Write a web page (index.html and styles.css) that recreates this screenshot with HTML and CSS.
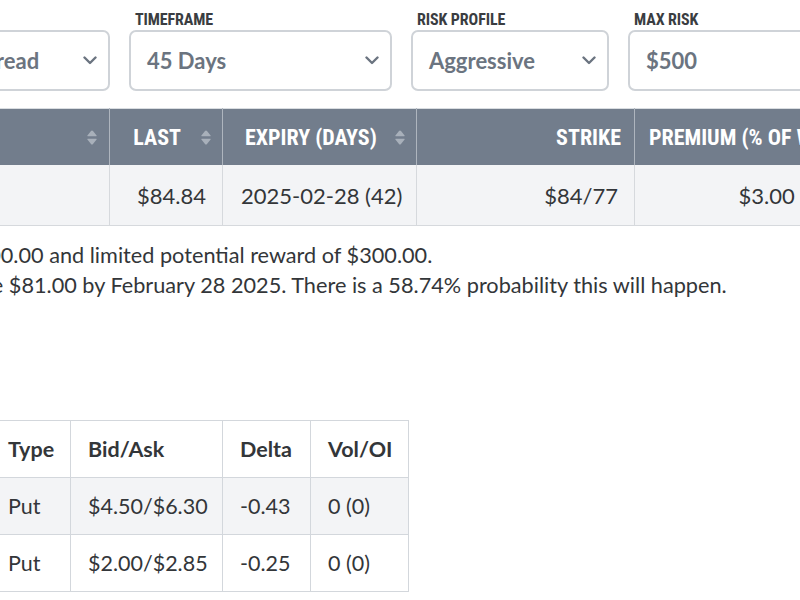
FILE: index.html
```html
<!DOCTYPE html>
<html lang="en">
<head>
<meta charset="utf-8">
<title>Trade Finder</title>
<link rel="stylesheet" href="styles.css">
</head>
<body>
<div class="page">
  <div class="filters">
    <div class="filter f-strategy">
      <div class="label">STRATEGY</div>
      <div class="select"><span>Bull Put Spread</span><svg class="chev" viewBox="0 0 14 9" width="14" height="9"><polyline points="1.5,1.5 7,7 12.5,1.5"/></svg></div>
    </div>
    <div class="filter f-time">
      <div class="label">TIMEFRAME</div>
      <div class="select"><span>45 Days</span><svg class="chev" viewBox="0 0 14 9" width="14" height="9"><polyline points="1.5,1.5 7,7 12.5,1.5"/></svg></div>
    </div>
    <div class="filter f-risk">
      <div class="label">RISK PROFILE</div>
      <div class="select"><span>Aggressive</span><svg class="chev" viewBox="0 0 14 9" width="14" height="9"><polyline points="1.5,1.5 7,7 12.5,1.5"/></svg></div>
    </div>
    <div class="filter f-max">
      <div class="label">MAX RISK</div>
      <div class="select input"><span>$500</span></div>
    </div>
  </div>

  <table class="results">
    <thead>
      <tr>
        <th class="c-sym"><div class="th-in between"><span>SYMBOL</span><svg class="sort" viewBox="0 0 10 15" width="10" height="15"><path d="M5 0.5 Q5.6 0.5 6 1 L9.6 5.6 Q10 6.3 9.2 6.3 H0.8 Q0 6.3 0.4 5.6 L4 1 Q4.4 0.5 5 0.5Z M5 14.5 Q4.4 14.5 4 14 L0.4 9.4 Q0 8.7 0.8 8.7 H9.2 Q10 8.7 9.6 9.4 L6 14 Q5.6 14.5 5 14.5Z"/></svg></div></th>
        <th class="c-last"><div class="th-in end"><span>LAST</span><svg class="sort" viewBox="0 0 10 15" width="10" height="15"><path d="M5 0.5 Q5.6 0.5 6 1 L9.6 5.6 Q10 6.3 9.2 6.3 H0.8 Q0 6.3 0.4 5.6 L4 1 Q4.4 0.5 5 0.5Z M5 14.5 Q4.4 14.5 4 14 L0.4 9.4 Q0 8.7 0.8 8.7 H9.2 Q10 8.7 9.6 9.4 L6 14 Q5.6 14.5 5 14.5Z"/></svg></div></th>
        <th class="c-exp"><div class="th-in between"><span>EXPIRY (DAYS)</span><svg class="sort" viewBox="0 0 10 15" width="10" height="15"><path d="M5 0.5 Q5.6 0.5 6 1 L9.6 5.6 Q10 6.3 9.2 6.3 H0.8 Q0 6.3 0.4 5.6 L4 1 Q4.4 0.5 5 0.5Z M5 14.5 Q4.4 14.5 4 14 L0.4 9.4 Q0 8.7 0.8 8.7 H9.2 Q10 8.7 9.6 9.4 L6 14 Q5.6 14.5 5 14.5Z"/></svg></div></th>
        <th class="c-strike"><div class="th-in end"><span>STRIKE</span></div></th>
        <th class="c-prem"><div class="th-in start"><span>PREMIUM (% OF WIDTH)</span></div></th>
      </tr>
    </thead>
    <tbody>
      <tr>
        <td class="c-sym">XOM</td>
        <td class="c-last num">$84.84</td>
        <td class="c-exp">2025-02-28 (42)</td>
        <td class="c-strike num">$84/77</td>
        <td class="c-prem num">$3.00 (42.86%)</td>
      </tr>
    </tbody>
  </table>

  <div class="summary">
    <p class="line l1">$200.00 and limited potential reward of $300.00.</p>
    <p class="line l2">above $81.00 by February 28 2025. There is a 58.74% probability this will happen.</p>
  </div>

  <table class="legs">
    <thead>
      <tr><th class="c-type">Type</th><th class="c-bid">Bid/Ask</th><th class="c-delta">Delta</th><th class="c-vol">Vol/OI</th></tr>
    </thead>
    <tbody>
      <tr class="alt"><td>Put</td><td>$4.50/$6.30</td><td>-0.43</td><td>0 (0)</td></tr>
      <tr><td>Put</td><td>$2.00/$2.85</td><td>-0.25</td><td>0 (0)</td></tr>
    </tbody>
  </table>
</div>
</body>
</html>
```
FILE: styles.css
```css
html, body {
  margin: 0;
  padding: 0;
  overflow: hidden;
  background: #ffffff;
}
body {
  width: 800px;
  height: 600px;
  font-family: Lato, "Open Sans", sans-serif;
  color: #333639;
}
.page {
  width: 800px;
}

/* filters */
.filters {
  display: flex;
  gap: 19px;
  padding-top: 9px;
  margin-left: -129px;
}
.filter {
  flex: none;
  display: flex;
  flex-direction: column;
}
.f-strategy { width: 239px; }
.f-time { width: 263px; }
.f-risk { width: 198px; }
.f-max { width: 260px; }
.label {
  font-family: "Roboto Condensed", "Liberation Sans Narrow", "DejaVu Sans Condensed", Roboto, sans-serif;
  font-stretch: condensed;
  font-weight: 700;
  font-size: 16px;
  line-height: 21px;
  padding-left: 6px;
  color: #3a3d41;
  letter-spacing: -0.1px;
}
.select {
  box-sizing: border-box;
  height: 61px;
  border: 2px solid #cfd3d8;
  border-radius: 7px;
  padding: 0 11px 0 16px;
  display: flex;
  align-items: center;
  justify-content: space-between;
  font-size: 22px;
  font-weight: 700;
  color: #6b7480;
  white-space: nowrap;
}
.chev {
  flex: none;
  fill: none;
  stroke: #6b7480;
  stroke-width: 2.4;
  stroke-linecap: round;
  stroke-linejoin: round;
}

/* results table */
.results {
  border-collapse: collapse;
  table-layout: fixed;
  margin-top: 17px;
  margin-left: -191px;
  width: 1090px;
  border-top: 1px solid #d9dde1;
}
.results .c-sym { width: 300px; }
.results .c-last { width: 112px; }
.results .c-exp { width: 193px; }
.results .c-strike { width: 217px; }
.results .c-prem { width: 267px; }
.results th {
  background: #727d8c;
  color: #ffffff;
  height: 56px;
  padding: 0;
  border-left: 1px solid #aeb5be;
  font-family: "Roboto Condensed", "Liberation Sans Narrow", "DejaVu Sans Condensed", Roboto, sans-serif;
  font-stretch: condensed;
  font-weight: 700;
  font-size: 22px;
  white-space: nowrap;
  text-align: left;
}
.results th:first-child { border-left: none; }
.th-in {
  display: flex;
  align-items: center;
  gap: 20px;
  padding: 0 11px 0 14px;
}
.th-in.end { justify-content: flex-end; }
.th-in.between { justify-content: space-between; padding-left: 22px; gap: 0; }
.results .c-sym .th-in { padding-right: 12px; }
.results .c-strike .th-in { padding-right: 13px; }
.th-in.start { justify-content: flex-start; }
.sort {
  flex: none;
  fill: #a8b0ba;
}
.results td {
  background: #f3f4f6;
  height: 60px;
  padding: 0 16px;
  border-left: 1px solid #d6d9dd;
  border-bottom: 1px solid #d6d9dd;
  font-size: 22px;
  white-space: nowrap;
  overflow: hidden;
}
.results td:first-child { border-left: none; }
.results td.num { text-align: right; }
.results td.c-exp { padding-left: 18px; }

/* summary text */
.summary {
  margin-top: 14px;
}
.line {
  margin: 0;
  font-size: 21.7px;
  line-height: 30px;
  white-space: nowrap;
  color: #333639;
}
.l1 { margin-left: -37px; }
.l2 { margin-left: -54px; }

/* legs table */
.legs {
  border-collapse: collapse;
  table-layout: fixed;
  margin-top: 120px;
  margin-left: -10px;
  width: 419px;
}
.legs .c-type { width: 80px; }
.legs .c-bid { width: 152px; }
.legs .c-delta { width: 88px; }
.legs .c-vol { width: 98px; }
.legs th, .legs td {
  border: 1px solid #d3d7dc;
  height: 57px;
  padding: 0 0 0 17px;
  text-align: left;
  font-size: 21.5px;
  white-space: nowrap;
  box-sizing: border-box;
}
.legs th {
  font-weight: 700;
  color: #333639;
}
.legs td { color: #333639; }
.legs tr.alt td { background: #f3f4f6; }
```
